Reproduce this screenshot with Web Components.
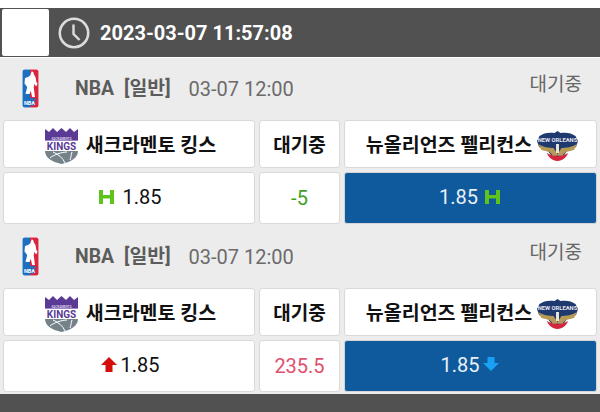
<!doctype html>
<html lang="ko">
<head>
<meta charset="utf-8">
<title>NBA</title>
<style>
html, body { margin: 0; padding: 0; background: #fff; }
body { width: 600px; height: 412px; overflow: hidden; font-family: Roboto, "Noto Sans CJK KR", sans-serif; }
</style>
</head>
<body>
<live-board>
  <clock-bar time="2023-03-07 11:57:08"></clock-bar>
  <match-block league="NBA" kind="[일반]" date="03-07 12:00" status="대기중">
    <team-cell slot="home" name="새크라멘토 킹스" logo="kings"></team-cell>
    <info-cell slot="mid" bold>대기중</info-cell>
    <team-cell slot="away" name="뉴올리언즈 펠리컨스" logo="pelicans" flip></team-cell>
    <odds-cell slot="home-odds" value="1.85" mark="h" gap="9"></odds-cell>
    <info-cell slot="mid-odds" color="#3f9f1f">-5</info-cell>
    <odds-cell slot="away-odds" value="1.85" mark="h" gap="7" selected after></odds-cell>
  </match-block>
  <match-block league="NBA" kind="[일반]" date="03-07 12:00" status="대기중">
    <team-cell slot="home" name="새크라멘토 킹스" logo="kings"></team-cell>
    <info-cell slot="mid" bold>대기중</info-cell>
    <team-cell slot="away" name="뉴올리언즈 펠리컨스" logo="pelicans" flip></team-cell>
    <odds-cell slot="home-odds" value="1.85" mark="up" gap="4"></odds-cell>
    <info-cell slot="mid-odds" color="#e0506e">235.5</info-cell>
    <odds-cell slot="away-odds" value="1.85" mark="down" gap="3" selected after></odds-cell>
  </match-block>
  <div style="height:18px;background:#515151"></div>
</live-board>

<script>
/* globals customElements HTMLElement */
const logos = {
  nba: `<svg width="17" height="39" viewBox="0 0 17 39">
    <rect width="17" height="39" rx="2.500" fill="#fff"/>
    <path d="M2.500.500H8v38H2.500a2 2 0 0 1-2-2v-34a2 2 0 0 1 2-2z" fill="#1d6fc0"/>
    <path d="M8 .500h6.500a2 2 0 0 1 2 2v34a2 2 0 0 1-2 2H8z" fill="#d8263f"/>
    <path d="M9.500 2.500c1.600-.3 2.400 1 2.200 2.800l1.800 2.700.8 5 1.200 1.500-.9 2.500-1.400-.5-.5-2-1 3.500.5 4 .8 6h-2.800l-1.400-6-1.400 3H3.500l1.700-7-2.700-3.500.5-5.500L6 8l2.200-1.500z" fill="#fff"/>
    <path d="M2 29h11v7.500H2z" fill="#1d6fc0"/>
    <text x="7.500" y="35.500" font-family="Roboto" font-weight="700" font-size="5.500" text-anchor="middle" fill="#fff">NBA</text>
  </svg>`,
  kings: `<svg width="33" height="36" viewBox="0 0 33 36">
    <path d="M0 1l4 3 4-4 4 4 4.500-4 4.500 4 4-4 4 4 4-3v9H0z" fill="#5a3a94"/>
    <rect y="9" width="33" height="3.600" fill="#5a3a94"/>
    <text x="16.500" y="11.500" font-family="Roboto" font-weight="700" font-size="3" text-anchor="middle" fill="#d9d0ea">SACRAMENTO</text>
    <text x="16.500" y="22" font-family="Roboto" font-weight="700" font-size="10" text-anchor="middle" fill="#5a3a94">KINGS</text>
    <path d="M0 23h33c0 6-6 11-16.500 13C6 34 0 29 0 23z" fill="#76828a"/>
    <path d="M8 24c5 2 10 6 12 11M22 24c-5 0-14 3-17 6M27 24c-1 3-1 6-2 8" fill="none" stroke="#fff" stroke-width="1"/>
  </svg>`,
  pelicans: `<svg width="41" height="30" viewBox="0 0 41 30">
    <path d="M20.500 0l3 2c6-1 11 0 15 3l2.500 5-2 6-8 3-4 5-6.500 1-6.500-1-4-5-8-3-2-6 2.500-5c4-3 9-4 15-3z" fill="#1f3a6e"/>
    <path d="M1 13c5 3 11 4 15.500 4l4 6 4-6c4.500 0 10.500-1 15.500-4l-3 6-8 2-4 3.500h-9L12.500 21l-8-2z" fill="#b79a57"/>
    <path d="M10 22c3 2 7 3 10.500 3s7.500-1 10.500-3c-1 4-5.500 8-10.500 8S11 26 10 22z" fill="#d3263a"/>
    <rect x="19" y="13" width="3" height="9" fill="#e9e3d2"/>
    <text x="20.500" y="10.500" font-family="Roboto" font-weight="700" font-size="5.800" text-anchor="middle" fill="#e7e7ee">NEW ORLEANS</text>
  </svg>`
}

const marks = {
  h: `<svg width="15" height="14" viewBox="0 0 15 14"><path d="M0 0h4v5h7V0h4v14h-4V8.500H4V14H0z" fill="#5fc41a"/></svg>`,
  up: `<svg width="16" height="16" viewBox="0 0 16 16"><path d="M8 0l8 8h-4.500v7h-7V8H0z" fill="#d40c0c"/></svg>`,
  down: `<svg width="16" height="16" viewBox="0 0 16 16"><path d="M4.500 0h7v6H16l-8 8-8-8h4.500z" fill="#18a0f5"/></svg>`
}

class LiveBoard extends HTMLElement {
  constructor () {
    super()
    this.attachShadow({mode: 'open'}).innerHTML = `
      <style>:host { display: flex; flex-direction: column; padding-top: 8px; }</style>
      <slot></slot>`
  }
}

class ClockBar extends HTMLElement {
  constructor () {
    super()
    this.attachShadow({mode: 'open'}).innerHTML = `
      <style>
      :host { display: flex; align-items: center; height: 49px; margin-bottom: 1px; background: #515151; color: #fff; }
      #box { width: 47px; height: 47px; margin-left: 2px; background: #fff; border-radius: 2px; }
      svg { margin-left: 9px; }
      #time { margin-left: 10px; font: 700 20px Roboto, sans-serif; }
      </style>
      <div id="box"></div>
      <svg width="32" height="32" viewBox="0 0 32 32" fill="none" stroke="#dcdcdc">
        <circle cx="16" cy="16" r="14.200" stroke-width="2.600"/>
        <path d="M15.500 7.500V17l6 6" stroke-width="2.400"/>
      </svg>
      <span id="time">${this.getAttribute('time')}</span>`
  }
}

class MatchBlock extends HTMLElement {
  constructor () {
    super()
    this.attachShadow({mode: 'open'}).innerHTML = `
      <style>
      :host { display: block; background: #ececec; height: 168px; box-sizing: border-box; font-family: Roboto, "Noto Sans CJK KR", sans-serif; }
      #league { display: flex; height: 62px; box-sizing: border-box; padding: 11px 18px 0 22px; color: #5c5c5c; }
      #logo { height: 39px; width: 17px; }
      #name { margin: 9px 0 0 36px; font-size: 19.400px; line-height: 22px; font-weight: 700; }
      #kind { margin-left: 10px; }
      #date { margin: 9px 0 0 18px; font-size: 20px; line-height: 22px; color: #6b6b6b; }
      #status { margin: 5px 0 0 auto; font-size: 19px; line-height: 22px; color: #666; }
      #grid { display: grid; grid-template-columns: 252px 81px 1fr; grid-template-rows: 48px 52px; gap: 4px; padding: 0 3px; }
      </style>
      <div id="league">
        <div id="logo">${logos.nba}</div>
        <div id="name">${this.getAttribute('league')}<span id="kind">${this.getAttribute('kind')}</span></div>
        <div id="date">${this.getAttribute('date')}</div>
        <div id="status">${this.getAttribute('status')}</div>
      </div>
      <div id="grid">
        <slot name="home"></slot><slot name="mid"></slot><slot name="away"></slot>
        <slot name="home-odds"></slot><slot name="mid-odds"></slot><slot name="away-odds"></slot>
      </div>`
  }
}

const cellStyle = `
  :host { display: flex; align-items: center; justify-content: center; box-sizing: border-box; background: #fff; border: 1px solid #d9d9d9; border-radius: 3px; color: #111; font-family: Roboto, "Noto Sans CJK KR", sans-serif; }
`

class TeamCell extends HTMLElement {
  constructor () {
    super()
    const name = `<span>${this.getAttribute('name')}</span>`
    const logo = logos[this.getAttribute('logo')]
    this.attachShadow({mode: 'open'}).innerHTML = `
      <style>${cellStyle}
      :host { gap: 8px; padding-left: 3px; font-size: 19.500px; font-weight: 700; }
      :host([flip]) { gap: 5px; }
      span { margin-bottom: 2px; }
      svg { display: block; margin-top: 4px; }
      </style>
      ${this.hasAttribute('flip') ? name + logo : logo + name}`
  }
}

class InfoCell extends HTMLElement {
  constructor () {
    super()
    this.attachShadow({mode: 'open'}).innerHTML = `
      <style>${cellStyle}
      :host { font-size: 20px; }
      :host([bold]) { font-size: 19px; font-weight: 700; padding-bottom: 2px; }
      </style>
      <span style="color:${this.getAttribute('color') || 'inherit'}"><slot></slot></span>`
  }
}

class OddsCell extends HTMLElement {
  constructor () {
    super()
    const mark = marks[this.getAttribute('mark')]
    const value = `<span>${this.getAttribute('value')}</span>`
    this.attachShadow({mode: 'open'}).innerHTML = `
      <style>${cellStyle}
      :host { gap: ${this.getAttribute('gap')}px; padding: 0 0 3px 2px; font-size: 20px; }
      :host([selected]) { padding: 0 2px 3px 0; background: #0f5a9c; border-color: #d4d4d4; color: #e8f0f7; }
      svg { display: block; }
      </style>
      ${this.hasAttribute('after') ? value + mark : mark + value}`
  }
}

customElements.define('live-board', LiveBoard)
customElements.define('clock-bar', ClockBar)
customElements.define('match-block', MatchBlock)
customElements.define('team-cell', TeamCell)
customElements.define('info-cell', InfoCell)
customElements.define('odds-cell', OddsCell)
</script>
</body>
</html>
